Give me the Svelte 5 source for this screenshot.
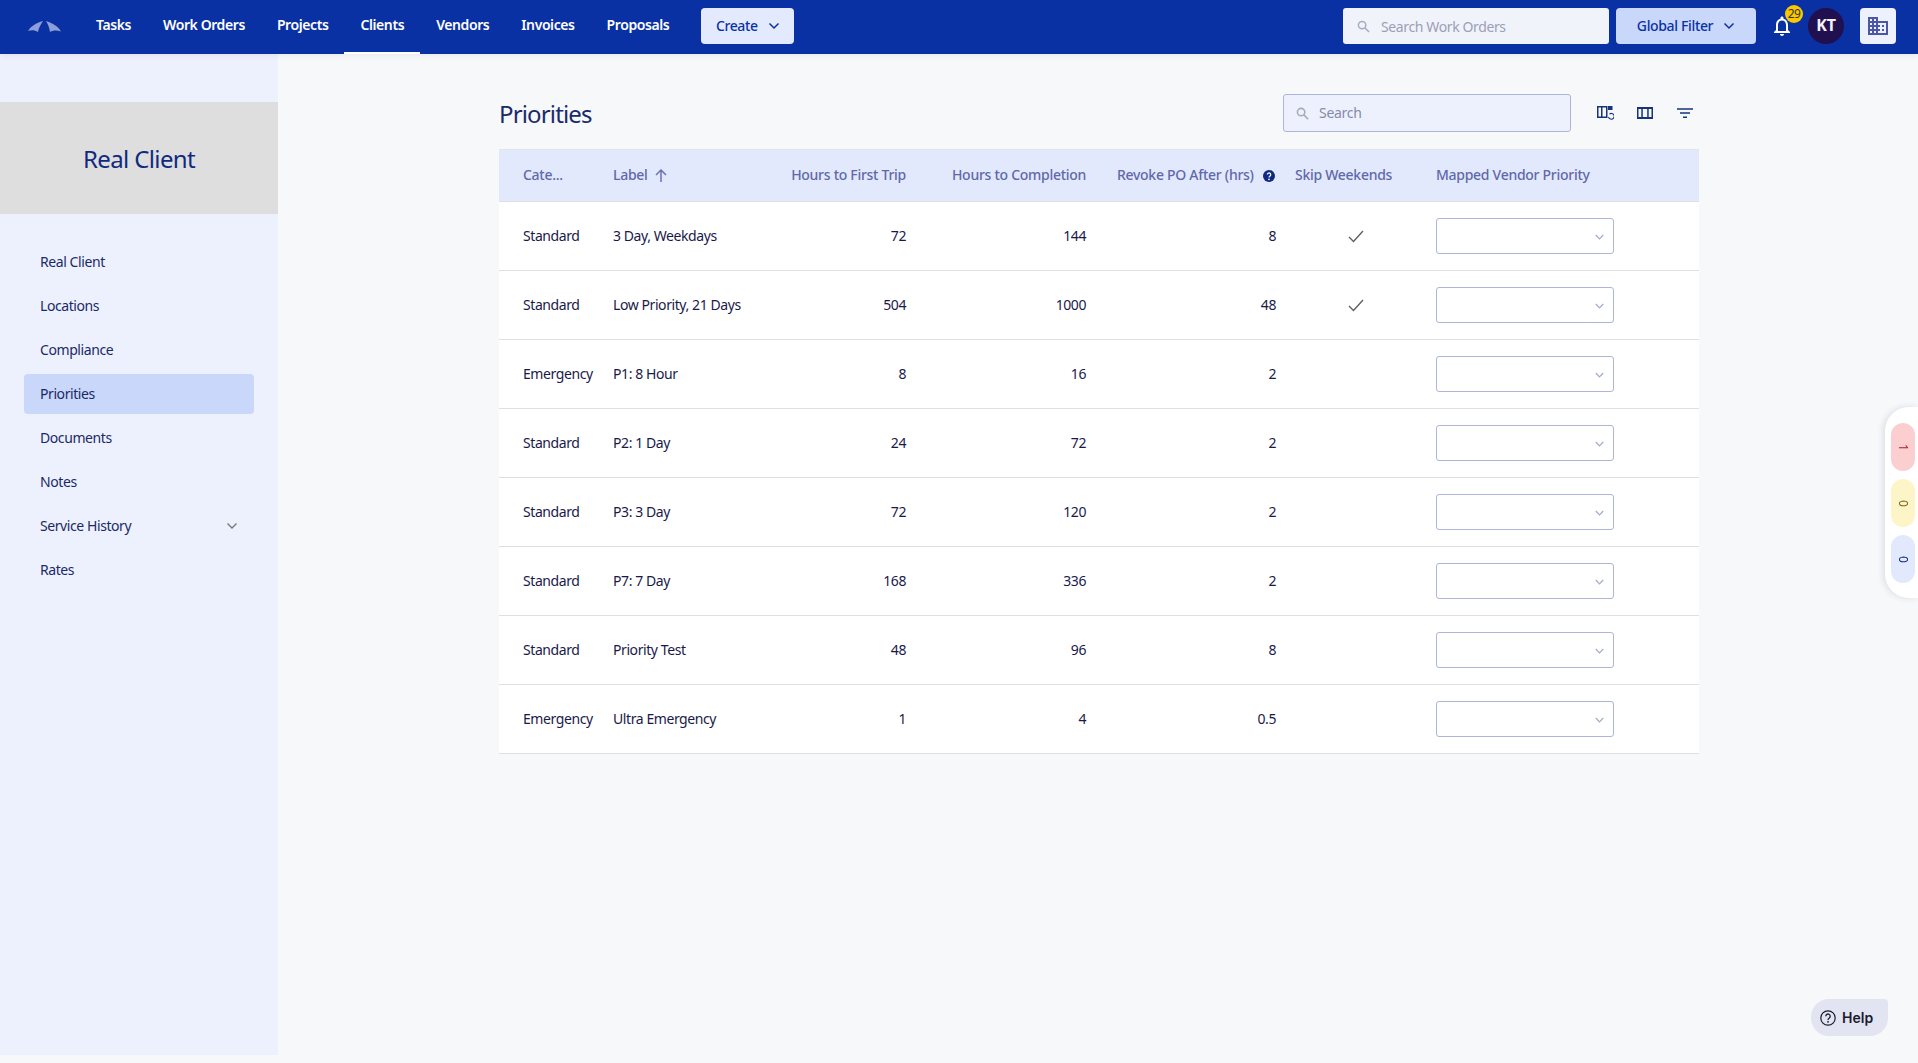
<script>
  const nav = ['Tasks', 'Work Orders', 'Projects', 'Clients', 'Vendors', 'Invoices', 'Proposals'];
  const side = ['Real Client', 'Locations', 'Compliance', 'Priorities', 'Documents', 'Notes', 'Service History', 'Rates'];
  const rows = [
    ['Standard', '3 Day, Weekdays', '72', '144', '8', true],
    ['Standard', 'Low Priority, 21 Days', '504', '1000', '48', true],
    ['Emergency', 'P1: 8 Hour', '8', '16', '2', false],
    ['Standard', 'P2: 1 Day', '24', '72', '2', false],
    ['Standard', 'P3: 3 Day', '72', '120', '2', false],
    ['Standard', 'P7: 7 Day', '168', '336', '2', false],
    ['Standard', 'Priority Test', '48', '96', '8', false],
    ['Emergency', 'Ultra Emergency', '1', '4', '0.5', false]
  ];
</script>

<header class="top">
  <svg class="logo" viewBox="0 0 33 11" width="33" height="11"><path d="M0 10 C3 5 8 2 15 0 C13 3 10.500 7 10 11 C7 9 3 9 0 10Z M18 0 C24 2 30 5 33 10.500 C29 9 25 9 22 11 C21.500 7 20 3 18 0Z" fill="#8c9fd8"/></svg>
  <nav class="links">
    {#each nav as n}
      <a class="link" class:on={n === 'Clients'} href="#/">{n}</a>
    {/each}
  </nav>
  <button class="create"><span>Create</span>
    <svg width="12" height="8" viewBox="0 0 12 8"><path d="M1.500 1.500 6 6l4.500-4.500" fill="none" stroke="#0a31a3" stroke-width="1.500"/></svg>
  </button>
  <div class="spacer"></div>
  <div class="gsearch">
    <svg width="13" height="13" viewBox="0 0 14 14"><circle cx="5.500" cy="5.500" r="4" fill="none" stroke="#a9abc0" stroke-width="1.600"/><path d="M8.500 8.500 13 13" stroke="#a9abc0" stroke-width="1.600"/></svg>
    <span>Search Work Orders</span>
  </div>
  <button class="gfilter"><span>Global Filter</span>
    <svg width="12" height="8" viewBox="0 0 12 8"><path d="M1.500 1.500 6 6l4.500-4.500" fill="none" stroke="#0a31a3" stroke-width="1.500"/></svg>
  </button>
  <div class="bell">
    <svg width="24" height="24" viewBox="0 0 24 24"><path fill="#fff" d="M12 22c1.100 0 2-.9 2-2h-4c0 1.100.89 2 2 2zm6-6v-5c0-3.070-1.640-5.640-4.500-6.320V4c0-.83-.67-1.500-1.500-1.500s-1.500.67-1.500 1.500v.68C7.630 5.360 6 7.920 6 11v5l-2 2v1h16v-1l-2-2zm-2 1H8v-6c0-2.480 1.510-4.500 4-4.500s4 2.020 4 4.500v6z"/></svg>
    <span class="badge">29</span>
  </div>
  <div class="avatar">KT</div>
  <button class="bld" aria-label="Building">
    <svg width="24" height="24" viewBox="0 0 24 24"><path fill="#4b57a6" d="M12 7V3H2v18h20V7H12zM6 19H4v-2h2v2zm0-4H4v-2h2v2zm0-4H4V9h2v2zm0-4H4V5h2v2zm4 12H8v-2h2v2zm0-4H8v-2h2v2zm0-4H8V9h2v2zm0-4H8V5h2v2zm10 12h-8v-2h2v-2h-2v-2h2v-2h-2V9h8v10zm-2-8h-2v2h2v-2zm0 4h-2v2h2v-2z"/></svg>
  </button>
</header>

<div class="body">
  <aside class="side">
    <div class="client">Real Client</div>
    <ul class="menu">
      {#each side as s}
        <li class="item" class:active={s === 'Priorities'}>
          <span>{s}</span>
          {#if s === 'Service History'}
            <svg width="12" height="8" viewBox="0 0 12 8"><path d="M1.500 1.500 6 6l4.500-4.500" fill="none" stroke="#757575" stroke-width="1.300"/></svg>
          {/if}
        </li>
      {/each}
    </ul>
  </aside>

  <main class="main">
    <div class="bar">
      <h1>Priorities</h1>
      <div class="tools">
        <div class="search">
          <svg width="13" height="13" viewBox="0 0 14 14"><circle cx="5.500" cy="5.500" r="4" fill="none" stroke="#a9abb8" stroke-width="1.700"/><path d="M8.500 8.500 13 13" stroke="#a9abb8" stroke-width="1.700"/></svg>
          <span>Search</span>
        </div>
        <svg class="ic1" width="17" height="14" viewBox="0 0 17 14"><path fill-rule="evenodd" fill="#16337f" d="M0 0h10.500v12H0ZM1.500 1.500v9h2.500v-9Zm4 0v9h3.500v-9Z"/><path fill="#16337f" d="M11 0h4.500v4H11Z"/><path d="M12.500 8a2.900 2.900 0 1 1-1 3" fill="none" stroke="#16337f" stroke-width="1.100"/></svg>
        <svg class="ic2" width="16" height="12" viewBox="0 0 16 12"><path fill-rule="evenodd" fill="#16337f" d="M0 0h16v12H0ZM1.500 2v8H4.300V2Zm4.300 0v8h4.400V2Zm5.900 0v8h2.800V2Z"/></svg>
        <svg class="ic3" width="16" height="10" viewBox="0 0 16 10"><path d="M0 1h16M3 5h10M6 9.200h4" stroke="#16337f" stroke-width="1.600"/></svg>
      </div>
    </div>

    <table class="tbl">
      <colgroup>
        <col style="width:90px"><col style="width:190px"><col style="width:127px"><col style="width:180px"><col style="width:190px"><col style="width:160px"><col>
      </colgroup>
      <thead>
        <tr>
          <th class="l">Cate...</th>
          <th class="l">Label
            <svg class="up" width="12" height="13" viewBox="0 0 12 13"><path d="M6 13V1.500M1 6l5-5 5 5" fill="none" stroke="#6b74b5" stroke-width="1.500"/></svg>
          </th>
          <th class="r">Hours to First Trip</th>
          <th class="r">Hours to Completion</th>
          <th class="r rv">Revoke PO After (hrs)
            <svg class="q" width="12" height="12" viewBox="0 0 12 12"><circle cx="6" cy="6" r="6" fill="#0f2a80"/><path d="M4.300 4.600a1.700 1.700 0 1 1 2.700 1.400c-.7.500-1 .8-1 1.500" fill="none" stroke="#fff" stroke-width="1.200"/><circle cx="6" cy="9.400" r=".8" fill="#fff"/></svg>
          </th>
          <th class="sk">Skip Weekends</th>
          <th class="mp">Mapped Vendor Priority</th>
        </tr>
      </thead>
      <tbody>
        {#each rows as r}
          <tr>
            <td class="l">{r[0]}</td>
            <td class="l">{r[1]}</td>
            <td class="r">{r[2]}</td>
            <td class="r">{r[3]}</td>
            <td class="r">{r[4]}</td>
            <td class="chk">
              {#if r[5]}
                <svg width="16" height="13" viewBox="0 0 16 13"><path d="M1 7l4.500 4.500L15 1" fill="none" stroke="#5f5f5f" stroke-width="1.400"/></svg>
              {/if}
            </td>
            <td class="mp">
              <div class="sel">
                <svg width="9" height="6" viewBox="0 0 9 6"><path d="M.8 1 4.500 4.800 8.200 1" fill="none" stroke="#a5a9cc" stroke-width="1.200"/></svg>
              </div>
            </td>
          </tr>
        {/each}
      </tbody>
    </table>
  </main>
</div>

<aside class="counts">
  <div class="pill red"><span>1</span></div>
  <div class="pill yel"><span>0</span></div>
  <div class="pill blu"><span>0</span></div>
</aside>

<button class="help">
  <svg width="16" height="16" viewBox="0 0 16 16"><circle cx="8" cy="8" r="7.200" fill="none" stroke="#1a1a2e" stroke-width="1.200"/><path d="M5.800 6.200a2.200 2.200 0 1 1 3.500 1.800c-.9.600-1.300 1-1.300 1.900" fill="none" stroke="#1a1a2e" stroke-width="1.300"/><circle cx="8" cy="11.800" r=".9" fill="#1a1a2e"/></svg>
  Help
</button>

<style>
  :global(body) {
    background: #f7f8fa;
    font-family: "Noto Sans", "Open Sans", sans-serif;
    color: #1a1a4a;
    font-size: 14px;
    overflow: hidden;
  }
  button { font-family: inherit; border: 0; }
  .top {
    height: 54px;
    padding-bottom: 2px;
    box-sizing: border-box;
    background: #0a31a3;
    display: flex;
    align-items: center;
    box-shadow: 0 2px 6px rgba(0, 0, 0, .06);
    position: relative;
    z-index: 2;
  }
  .logo { margin-left: 28px; margin-right: 19px; }
  .links { display: flex; height: 54px; align-self: flex-start; }
  .link {
    color: #fff;
    text-decoration: none;
    font-weight: 600;
    font-size: 14px;
    letter-spacing: -.41px;
    padding: 0 16px;
    line-height: 50px;
    border-bottom: 2px solid transparent;
    box-sizing: border-box;
    height: 54px;
  }
  .link.on { border-bottom-color: #fff; }
  .create {
    margin-left: 16px;
    width: 93px;
    height: 36px;
    padding: 0;
    background: #e4eafd;
    color: #0a31a3;
    border-radius: 4px;
    font-size: 14px;
    font-weight: 500;
    letter-spacing: -.4px;
    display: flex;
    align-items: center;
    justify-content: center;
    gap: 10px;
  }
  .create span, .gfilter span { position: relative; top: -1px; }
  .spacer { flex: 1; }
  .gsearch {
    width: 266px;
    height: 36px;
    background: #f1f3fb;
    border-radius: 3px;
    display: flex;
    align-items: center;
    box-sizing: border-box;
    padding-left: 14px;
    gap: 11px;
    color: #9b9fb8;
    letter-spacing: -.38px;
  }
  .gfilter {
    margin-left: 7px;
    width: 140px;
    height: 36px;
    padding: 0;
    background: #c9d7fa;
    color: #0a31a3;
    border-radius: 4px;
    font-size: 14px;
    font-weight: 500;
    letter-spacing: -.35px;
    display: flex;
    align-items: center;
    justify-content: center;
    gap: 10px;
  }
  .bell { position: relative; margin-left: 14px; width: 24px; height: 24px; }
  .badge {
    position: absolute;
    left: 15px;
    top: -9px;
    width: 18px;
    height: 18px;
    border-radius: 50%;
    background: #fac800;
    color: #333;
    font-size: 12px;
    line-height: 18px;
    text-align: center;
    letter-spacing: -.5px;
  }
  .avatar {
    margin-left: 14px;
    width: 36px;
    height: 36px;
    border-radius: 50%;
    background: #21104f;
    color: #f2f2f8;
    font-weight: 700;
    font-size: 16px;
    line-height: 35px;
    text-align: center;
    letter-spacing: -.3px;
  }
  .bld {
    margin-left: 16px;
    margin-right: 22px;
    width: 36px;
    height: 36px;
    background: #edf1fd;
    border-radius: 4px;
    display: flex;
    align-items: center;
    justify-content: center;
    padding: 0;
  }
  .body { display: flex; height: 1001px; }
  .side { width: 278px; background: #edf1fd; padding-top: 48px; box-sizing: border-box; flex: none; }
  .client {
    height: 112px;
    background: #dedede;
    color: #0f2a80;
    font-size: 24px;
    letter-spacing: -.62px;
    line-height: 114px;
    text-align: center;
  }
  .menu { list-style: none; margin: 28px 24px 0; padding: 0; }
  .item {
    height: 40px;
    margin-bottom: 4px;
    border-radius: 4px;
    padding: 0 16px;
    display: flex;
    align-items: center;
    justify-content: space-between;
    letter-spacing: -.42px;
    color: #1a2a66;
  }
  .item span { position: relative; top: -1px; }
  .item.active { background: #c9d7fa; }
  .main { width: 1200px; margin-left: 221px; }
  .bar {
    display: flex;
    justify-content: space-between;
    align-items: flex-start;
    padding-top: 40px;
    height: 95px;
    box-sizing: border-box;
  }
  h1 {
    margin: 0;
    font-size: 24px;
    line-height: 38px;
    font-weight: 400;
    letter-spacing: -.85px;
    color: #1b2a6b;
    position: relative;
    top: 1px;
  }
  .tools { display: flex; align-items: center; padding-right: 6px; }
  .search {
    width: 288px;
    height: 38px;
    box-sizing: border-box;
    background: #edf1fd;
    border: 1px solid #aeb4dc;
    border-radius: 3px;
    display: flex;
    align-items: center;
    padding-left: 12px;
    gap: 10px;
    color: #868aa8;
    letter-spacing: -.3px;
  }
  .search span { position: relative; top: -1px; }
  .ic1 { margin-left: 26px; margin-top: -1px; }
  .ic2 { margin-left: 23px; margin-top: -1px; }
  .ic3 { margin-left: 24px; margin-top: -1px; }
  .tbl {
    width: 1200px;
    table-layout: fixed;
    border-collapse: collapse;
    background: #fff;
    letter-spacing: -.42px;
  }
  th {
    height: 52px;
    background: #e3e9fc;
    border-top: 1px solid #e4e4e4;
    border-bottom: 1px solid #e0e0e4;
    color: #5f68ab;
    font-weight: 500;
    white-space: nowrap;
    letter-spacing: -.28px;
    padding: 0 0 2px;
    box-sizing: border-box;
  }
  td {
    height: 69px;
    border-bottom: 1px solid #e0e0e0;
    padding: 0;
    box-sizing: border-box;
    color: #1a1a4a;
  }
  td.l, td.r { padding-bottom: 2px; }
  .l { text-align: left; padding-left: 24px; }
  th.l { padding-left: 24px; }
  .r { text-align: right; }
  th.rv { padding-right: 1px; }
  .q { vertical-align: -2px; margin-left: 6px; }
  .up { vertical-align: -2px; margin-left: 4px; }
  th.sk { text-align: left; padding-left: 19px; }
  .chk { text-align: center; padding-bottom: 3px; }
  .chk svg { display: inline-block; vertical-align: middle; }
  th.mp { text-align: left; }
  .sel {
    width: 178px;
    height: 36px;
    box-sizing: border-box;
    border: 1px solid #aeb4dc;
    border-radius: 3px;
    display: flex;
    align-items: center;
    justify-content: flex-end;
    padding: 2px 9px 0 0;
    background: #fff;
  }
  .counts {
    position: fixed;
    left: 1885px;
    top: 407px;
    width: 33px;
    height: 191px;
    background: #fff;
    border-radius: 24px 0 0 24px;
    box-shadow: -2px 0 6px rgba(30, 40, 90, .12);
    box-sizing: border-box;
    padding: 16px 0 0 6px;
  }
  .pill {
    width: 24px;
    height: 48px;
    border-radius: 12px;
    margin-bottom: 8px;
    display: flex;
    align-items: center;
    justify-content: center;
    font-size: 12px;
  }
  .pill span { transform: rotate(90deg); display: block; }
  .red { background: #fbcfd0; color: #b01c22; }
  .yel { background: #fdf4c8; color: #80690c; }
  .blu { background: #e3e9fc; color: #0f2a80; }
  .help {
    position: fixed;
    left: 1811px;
    top: 999px;
    width: 77px;
    height: 37px;
    background: #e2e4f2;
    border-radius: 18px 4px 18px 18px;
    font-family: Inter, sans-serif;
    font-weight: 600;
    font-size: 14px;
    color: #1a1a2e;
    display: flex;
    align-items: center;
    gap: 6px;
    padding: 0 0 0 9px;
    box-sizing: border-box;
  }
</style>
